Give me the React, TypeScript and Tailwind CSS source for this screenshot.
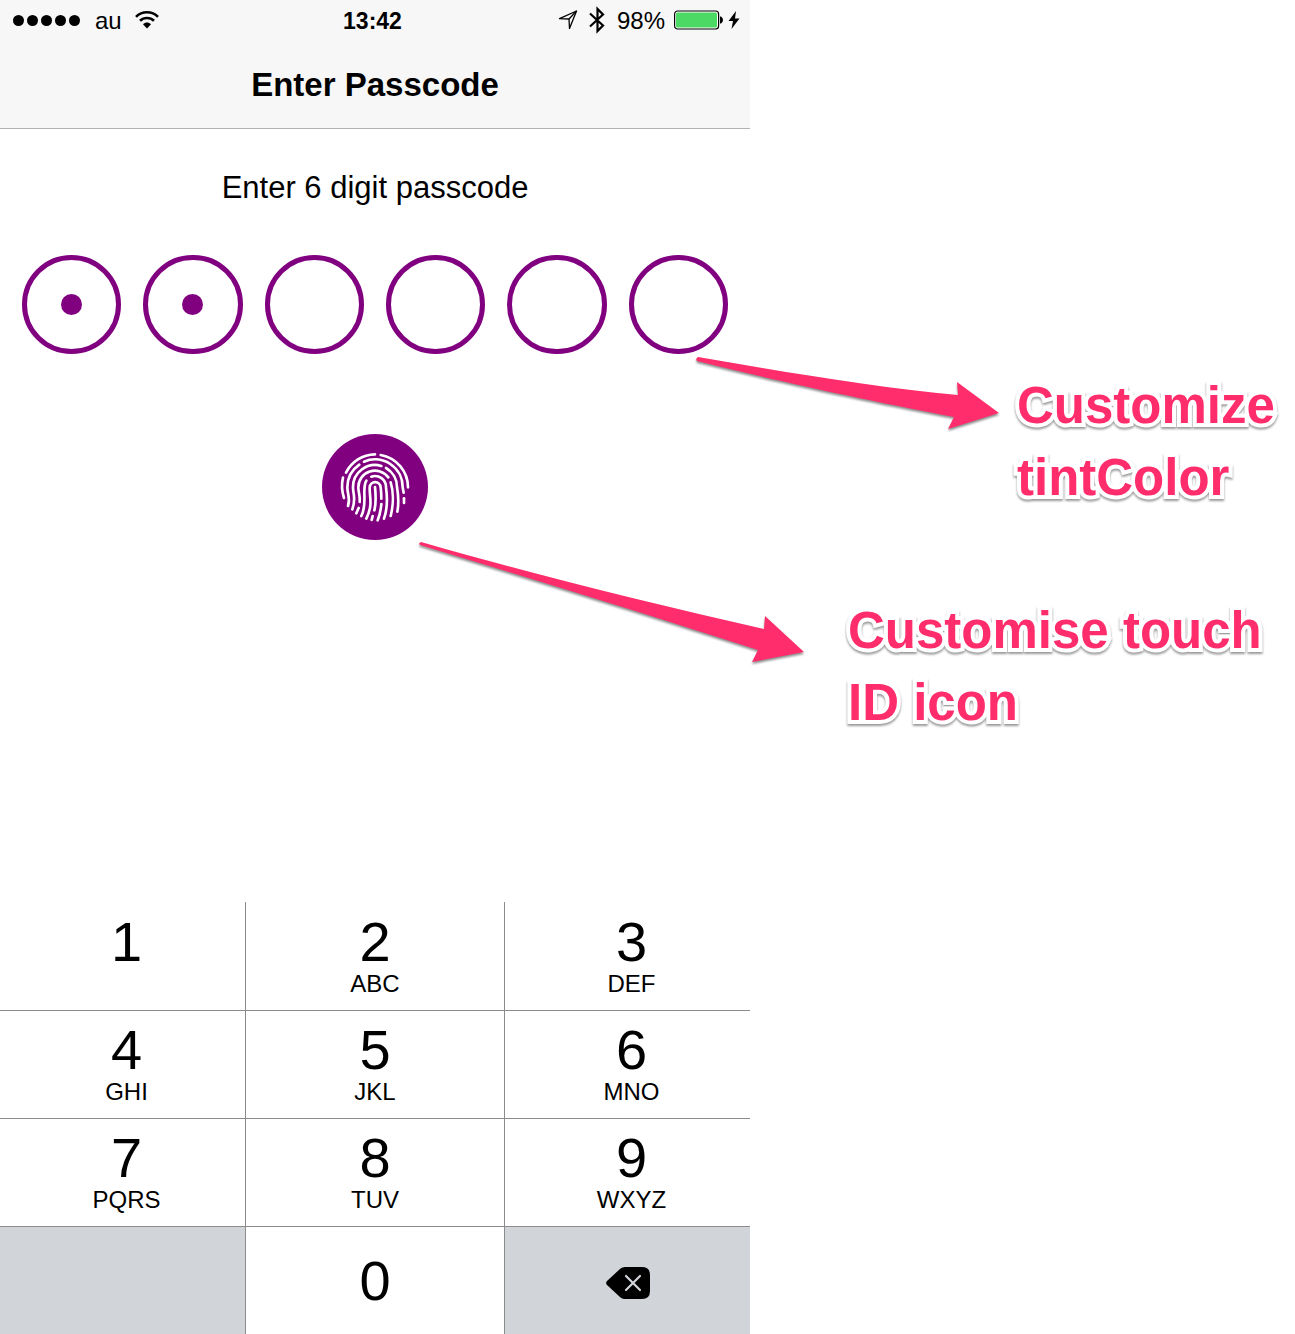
import React from "react";

const PURPLE = "#800080";
const PINK = "#ff2d6c";

const KEYS: { digit: string; letters: string }[] = [
  { digit: "1", letters: "" },
  { digit: "2", letters: "ABC" },
  { digit: "3", letters: "DEF" },
  { digit: "4", letters: "GHI" },
  { digit: "5", letters: "JKL" },
  { digit: "6", letters: "MNO" },
  { digit: "7", letters: "PQRS" },
  { digit: "8", letters: "TUV" },
  { digit: "9", letters: "WXYZ" },
];

const RIDGES = [
  "M108 146 A99 99 0 0 1 195 91",
  "M212 93 A99 99 0 0 1 294 190",
  "M99 161 Q92 190 102 222",
  "M114 246 C122 222 112 212 112 190 A83 83 0 0 1 148 122",
  "M162 113 A83 83 0 0 1 278 190 L281 206",
  "M282 223 V237",
  "M127 256 C139 222 129 212 129 190 A66 66 0 0 1 214 126",
  "M228 132 A66 66 0 0 1 261 190 C266 218 266 242 262 263",
  "M149 234 C151 214 145 208 145 190 A50 50 0 0 1 235 160",
  "M146 252 L139 268",
  "M242 175 C252 206 249 248 242 276",
  "M154 276 C174 238 154 192 169 170",
  "M184 158 A33 33 0 0 1 228 190 C233 226 232 256 222 284",
  "M169 284 C190 240 178 220 179 190 C181 169 210 169 212 190 Q214 206 214 224",
  "M195 189 C198 220 199 238 193 259",
  "M188 276 L185 288",
  "M214 240 Q212 266 203 289",
];

function Wifi() {
  return (
    <svg viewBox="0 0 24 18" className="w-6" aria-label="Wi-Fi" fill="none" stroke="black" strokeWidth="2.6">
      <path d="M1 5.8 C7 -0.2 17 -0.2 23 5.8" />
      <path d="M5 9.8 C9 6 15 6 19 9.8" />
      <path d="M8 13.200 C10.300 10.900 13.700 10.900 16 13.200 L12 17.500 Z" fill="black" stroke="none" />
    </svg>
  );
}

function StatusBar() {
  return (
    <div className="grid h-10 grid-cols-[1fr_auto_1fr] items-center pr-[10px] pl-[13px] text-2xl leading-none">
      <div className="flex items-center">
        <span className="flex gap-[3px]" aria-label="Signal strength">
          {[0, 1, 2, 3, 4].map((i) => (
            <i key={i} className="size-[11px] rounded-full bg-black" />
          ))}
        </span>
        <span className="mr-[13px] ml-[15px] pt-[2px]">au</span>
        <Wifi />
      </div>
      <time className="pt-[2px] pr-2 text-[23px] font-bold">13:42</time>
      <div className="flex items-center justify-end">
        <svg viewBox="0 0 20 20" className="mr-[11px] w-5" fill="none" stroke="black" strokeWidth="1.300" aria-label="Location">
          <path d="M1.500 8.700 L18.500 1 L11.500 18.500 L11 9 Z" strokeLinejoin="round" />
          <path d="M11 9 L18.500 1" />
        </svg>
        <svg viewBox="0 0 16 28" className="mr-[12px] w-4" fill="none" stroke="black" strokeWidth="2.200" aria-label="Bluetooth">
          <path d="M1 7.500 L14 19.500 L8.500 25 V3 L14 8.500 L1 20.500" />
        </svg>
        <span className="mr-[9px] pt-[2px]">98%</span>
        <svg viewBox="0 0 49 20" className="mr-[5px] w-[49px]" aria-label="Battery">
          <rect x="0.600" y="1" width="44" height="18" rx="3" fill="white" stroke="black" strokeWidth="1.200" />
          <rect x="2" y="2.500" width="41" height="15" rx="1.500" fill="#4cd964" />
          <path d="M46 6.500 h1 q2 1 2 3.500 q0 2.500 -2 3.500 h-1 Z" />
        </svg>
        <svg viewBox="0 0 12 20" className="w-3" aria-label="Charging">
          <path d="M8 1 L0.500 11 H5 L3.500 19 L11.500 8.500 H7 Z" />
        </svg>
      </div>
    </div>
  );
}

function PasscodeDots({ filled }: { filled: number }) {
  return (
    <div className="grid grid-cols-6 gap-[22px] px-[22px]" role="img" aria-label={`${filled} of 6 digits entered`}>
      {[0, 1, 2, 3, 4, 5].map((i) => (
        <span key={i} className="flex aspect-square items-center justify-center rounded-full border-5 border-[#800080]">
          {i < filled && <i className="size-[21px] rounded-full bg-[#800080]" />}
        </span>
      ))}
    </div>
  );
}

function Keypad() {
  return (
    <div className="mt-auto grid auto-rows-[108px] grid-cols-[245fr_259fr_246fr] [&>*]:border-[#8c8c8c]">
      {KEYS.map((k, i) => (
        <button
          key={k.digit}
          type="button"
          className={`flex flex-col items-center ${i > 2 ? "border-t pt-[11px]" : "pt-3"} ${i % 3 ? "border-l" : ""} ${i % 3 === 1 ? "" : "pl-2"}`}
        >
          <span className="text-[56px] leading-[56px]">{k.digit}</span>
          <span className="text-[24px] leading-7">{k.letters}</span>
        </button>
      ))}
      <div className="border-t bg-[#d1d5da]" />
      <button type="button" className="flex items-center justify-center border-t border-l text-[56px] leading-[56px]">
        0
      </button>
      <button type="button" aria-label="Delete" className="flex items-center justify-center border-t border-l bg-[#d1d5da] pt-1">
        <svg viewBox="0 0 44 32" className="w-11">
          <path d="M14.500 1.500 Q16.500 0 19 0 H36 Q44 0 44 8 V24 Q44 32 36 32 H19 Q16.500 32 14.500 30.500 L1 18 Q-0.800 16 1 14 Z" />
          <path d="M20 9 L34 23 M34 9 L20 23" stroke="#d1d5da" strokeWidth="2.200" strokeLinecap="round" />
        </svg>
      </button>
    </div>
  );
}

function Note({ lines, className }: { lines: string[]; className: string }) {
  return (
    <p
      className={`text-[51px] leading-[72px] font-bold whitespace-nowrap text-[#ff2d6c] drop-shadow-[0_2px_1px_rgba(0,0,0,0.4)] [-webkit-text-stroke:8px_white] [paint-order:stroke_fill] [stroke-linejoin:round] ${className}`}
    >
      {lines.map((l) => (
        <span key={l} className="block">
          {l}
        </span>
      ))}
    </p>
  );
}

export default function App() {
  return (
    <div className="relative flex min-h-screen overflow-hidden bg-white font-['Liberation_Sans',Arial,sans-serif] text-black">
      <main className="flex min-w-0 basis-[750px] flex-col">
        <header className="border-b border-[#b2b2b2] bg-[#f7f7f7]">
          <StatusBar />
          <h1 className="flex h-[88px] items-center justify-center pt-[2px] text-[33px] font-bold">Enter Passcode</h1>
        </header>
        <p className="mt-[39px] mb-[47px] text-center text-[31px] leading-10">Enter 6 digit passcode</p>
        <PasscodeDots filled={2} />
        <button type="button" aria-label="Touch ID" className="mt-20 self-center">
          <svg viewBox="36 30 318 318" className="w-[106px]" fill="none" stroke="white" strokeWidth="8" strokeLinecap="round">
            <circle cx="195" cy="189" r="159" fill={PURPLE} stroke="none" />
            {RIDGES.map((d) => (
              <path key={d} d={d} />
            ))}
          </svg>
        </button>
        <Keypad />
      </main>
      <aside className="min-w-0 flex-1 pt-[370px]">
        <Note lines={["Customize", "tintColor"]} className="pl-[267px]" />
        <Note lines={["Customise touch", "ID icon"]} className="mt-[81px] pl-[98px]" />
      </aside>
      <svg
        viewBox="410 350 600 320"
        className="pointer-events-none absolute top-[350px] left-[410px] w-[600px] drop-shadow-[0_2px_1px_rgba(0,0,0,0.45)]"
        fill={PINK}
        aria-hidden="true"
      >
        <path d="M698 357 C790 373 880 388 958 395 L957 382 L999 413 L948 429 L954 417 C880 403 780 382 697 361 Q695 359 698 357 Z" />
        <path d="M421 542 C540 576 650 603 764 629 L765 616 L804 652 L752 662 L758 650 C640 612 530 578 420 545 Q418 543 421 542 Z" />
      </svg>
    </div>
  );
}
